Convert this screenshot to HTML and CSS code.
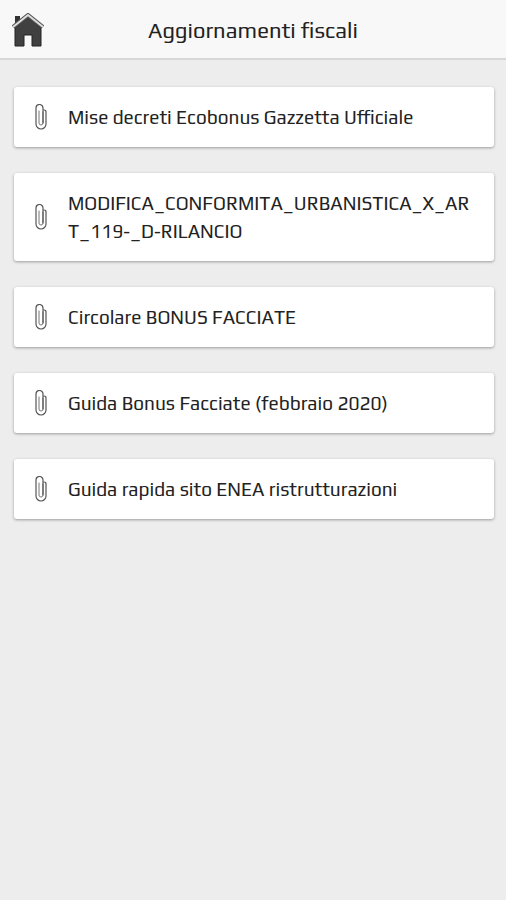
FILE: index.html
```html
<!DOCTYPE html>
<html lang="it">
<head>
<meta charset="utf-8">
<meta name="viewport" content="width=device-width, initial-scale=1">
<title>Aggiornamenti fiscali</title>
<link rel="stylesheet" href="styles.css">
</head>
<body>
<svg class="defs" aria-hidden="true">
  <symbol id="clip" viewBox="0 0 12 26">
    <g fill="none" stroke-linecap="round">
      <path d="M4 7v12a2 2 0 0 0 4 0V8" stroke="#777" stroke-width="1"/>
      <path d="M8 19V4a3.500 3.500 0 0 0-7 0V20a5 5 0 0 0 10 0V8q0-2-2-2" stroke="#555" stroke-width="1.200"/>
    </g>
  </symbol>
</svg>
<header class="bar">
  <a class="home" href="#" aria-label="Home">
    <svg viewBox="0 0 32 34" aria-hidden="true">
      <path d="M3 3h5v6l-5 5z" fill="#333"/>
      <path d="M16 3 3 15v18h9V22h8v11h9V15z" fill="#404040" stroke="#222" stroke-width="1"/>
      <path d="M1 14 16 2l15 12" fill="none" stroke="#555" stroke-width="4"/>
      <path d="M1 14 16 2l15 12" fill="none" stroke="#ddd" stroke-width="2"/>
    </svg>
  </a>
  <h1 class="title">Aggiornamenti fiscali</h1>
</header>
<main>
  <ul class="list">
    <li><a class="card" href="#"><svg class="clip" aria-hidden="true"><use href="#clip"/></svg><span class="label">Mise decreti Ecobonus Gazzetta Ufficiale</span></a></li>
    <li><a class="card" href="#"><svg class="clip" aria-hidden="true"><use href="#clip"/></svg><span class="label">MODIFICA_CONFORMITA_URBANISTICA_X_ART_119-_D-RILANCIO</span></a></li>
    <li><a class="card" href="#"><svg class="clip" aria-hidden="true"><use href="#clip"/></svg><span class="label">Circolare BONUS FACCIATE</span></a></li>
    <li><a class="card" href="#"><svg class="clip" aria-hidden="true"><use href="#clip"/></svg><span class="label">Guida Bonus Facciate (febbraio 2020)</span></a></li>
    <li><a class="card" href="#"><svg class="clip" aria-hidden="true"><use href="#clip"/></svg><span class="label">Guida rapida sito ENEA ristrutturazioni</span></a></li>
  </ul>
</main>
</body>
</html>
```
FILE: styles.css
```css
* { box-sizing: border-box; }
body {
  margin: 0;
  min-height: 100vh;
  background: #ededed;
  color: #222;
  font-family: Play, "Open Sans", "Noto Sans", sans-serif;
}
.defs { position: absolute; width: 0; height: 0; }
.bar {
  display: grid;
  grid-template-columns: 32px 1fr 32px;
  align-items: center;
  height: 60px;
  padding: 2px 12px 0;
  background: #f8f8f8;
  border-bottom: 2px solid #d8d8d8;
}
.home svg { display: block; width: 32px; height: 34px; }
.title { margin: 0; font-size: 22px; font-weight: 400; line-height: 28px; text-align: center; }
.list {
  display: flex;
  flex-direction: column;
  gap: 26px;
  margin: 0;
  padding: 27px 12px 27px 14px;
  list-style: none;
}
.card {
  display: flex;
  align-items: center;
  padding: 16px 20px;
  background: #fff;
  border-radius: 3px;
  box-shadow: 0 1px 3px rgba(0, 0, 0, 0.35);
  color: inherit;
  text-decoration: none;
}
.clip { flex: none; width: 12px; height: 26px; margin: 0 21px 0 1px; }
.label { font-size: 19px; line-height: 28px; overflow-wrap: anywhere; }
```
